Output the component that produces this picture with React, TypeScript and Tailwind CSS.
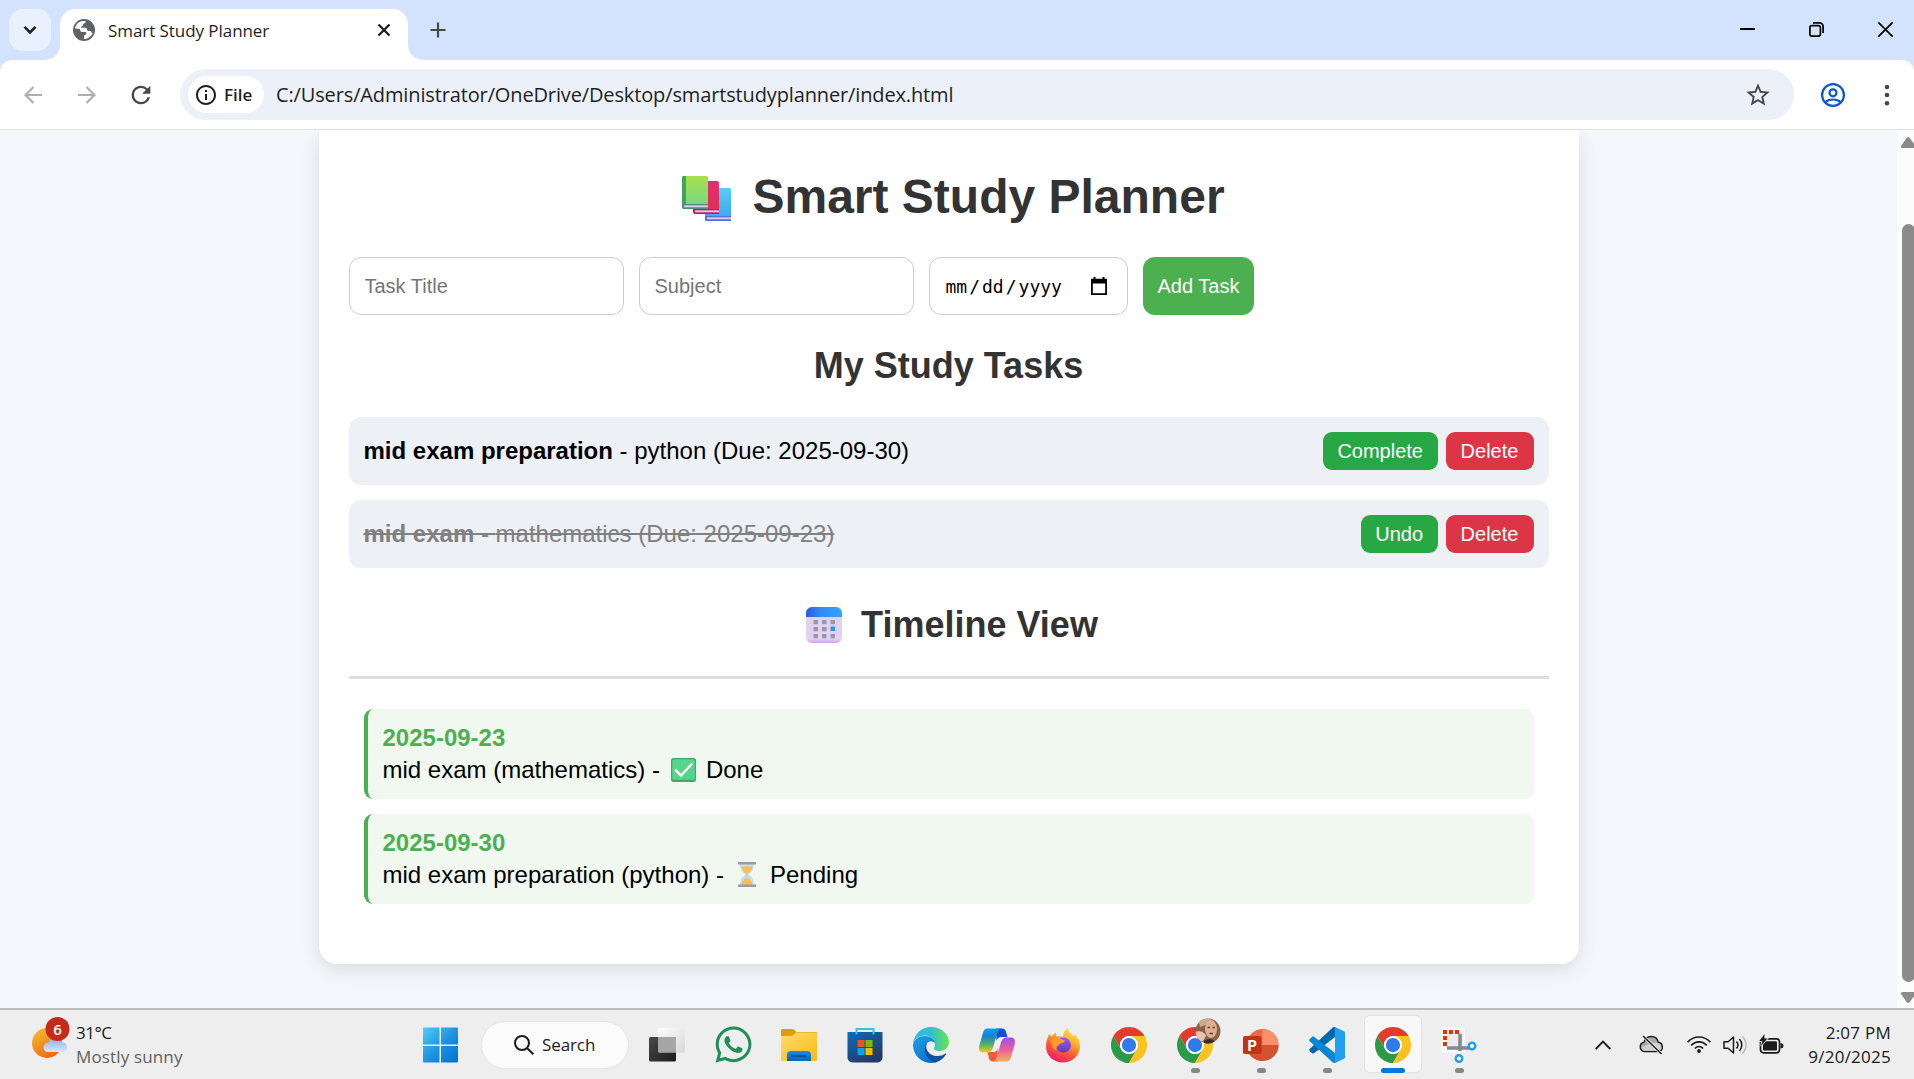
import React from "react";
import { FaWhatsapp } from "react-icons/fa";
import { MdOutlineInfo, MdRefresh, MdStarBorder } from "react-icons/md";

const ui = "font-['Open_Sans','Noto_Sans',sans-serif]";

/* ---------- browser chrome ---------- */

function GlobeIcon() {
  return (
    <svg width="22" height="22" viewBox="0 0 22 22">
      <circle cx="11" cy="11" r="11" fill="#5f6368" />
      <path d="M2 9.6C2.6 5.400 5.800 2.300 9.800 2c1.500 0 2.600.2 3.200.6-.3 1-.9 1.500-1.900 1.800-.9.3-1.300.8-1.200 1.700.1.900-.3 1.400-1.200 1.500-.6.1-.8.500-.7 1.100h4.200c1.200 0 1.700.7 1.800 1.800.1.900.6 1.400 1.600 1.400h1.500c.9 0 1.300.5 1.400 1.300.1.600.5.900 1.200.9-1 2.700-3.400 4.800-6.300 5.600-.5.1-1.600.2-2.400.2v-2.600c0-.9.5-1.400 1.400-1.500.8-.1 1.100-.6 1-1.500-.1-.8-.6-1.200-1.500-1.200H9.600c-1.500 0-2.300-.8-2.400-2.200-.1-.8-.6-1.200-1.500-1.200z" fill="#fff" />
    </svg>
  );
}

function TabStrip() {
  return (
    <div className="flex h-[60px] shrink-0 items-start bg-[#d3e3fd]">
      <button className="ml-[9px] mt-[9px] flex h-[42px] w-[42px] items-center justify-center rounded-[14px] bg-[#e9f1fe]">
        <svg width="14" height="10" viewBox="0 0 14 10" fill="none" stroke="#1f1f1f" strokeWidth="2.600">
          <path d="M1.500 1.800 7 7.300l5.500-5.500" />
        </svg>
      </button>
      <div className="relative ml-[9px] mt-[9px] flex h-[51px] w-[348px] items-center rounded-t-[15px] bg-white pb-[17px]">
        <svg className="absolute -left-[15px] bottom-0" width="15" height="15"><path d="M15 0v15H0A15 15 0 0 0 15 0Z" fill="#fff" /></svg>
        <svg className="absolute -right-[15px] bottom-0" width="15" height="15"><path d="M0 0v15h15A15 15 0 0 1 0 0Z" fill="#fff" /></svg>
        <div className="ml-[13px] mt-[8px]"><GlobeIcon /></div>
        <span className={`${ui} ml-[13px] mt-[10px] whitespace-nowrap text-[17px] leading-6 tracking-[-0.06px] text-[#1f1f1f]`}>Smart Study Planner</span>
        <svg className="ml-auto mr-[17px] mt-[8px] shrink-0" width="14" height="14" viewBox="0 0 14 14" stroke="#1f1f1f" strokeWidth="2.300">
          <path d="m1.500 1.500 11 11m0-11-11 11" />
        </svg>
      </div>
      <svg className="ml-[22px] mt-[22px]" width="16" height="16" viewBox="0 0 16 16" stroke="#474747" strokeWidth="2.200">
        <path d="M8 .5v15M.5 8h15" />
      </svg>
      <div className="ml-auto mr-[21px] mt-[22px] flex items-center gap-[54px]">
        <svg width="15" height="15" viewBox="0 0 15 15"><path d="M0 7h15" stroke="#000" strokeWidth="2" /></svg>
        <svg width="15" height="15" viewBox="0 0 15 15" fill="none" stroke="#000" strokeWidth="1.700">
          <rect x=".9" y="3.600" width="10.500" height="10.500" rx="2" />
          <path d="M4 .9h6.600a3.500 3.500 0 0 1 3.500 3.500V11" />
        </svg>
        <svg width="15" height="15" viewBox="0 0 15 15" stroke="#000" strokeWidth="1.700"><path d="m0 0 15 15M15 0 0 15" /></svg>
      </div>
    </div>
  );
}

function Toolbar() {
  return (
    <div className="shrink-0 bg-[#d3e3fd]">
      <div className="flex h-[70px] items-center rounded-t-[12px] border-b border-[#dcdcdc] bg-white">
        <svg className="ml-[24px]" width="18" height="18" viewBox="0 0 18 18" fill="none" stroke="#aeaeae" strokeWidth="2.200"><path d="M18 9H2M9.500 1 1.500 9l8 8" /></svg>
        <svg className="ml-[36px]" width="18" height="18" viewBox="0 0 18 18" fill="none" stroke="#aeaeae" strokeWidth="2.200"><path d="M0 9h16M8.500 1l8 8-8 8" /></svg>
        <MdRefresh className="ml-[31px] text-[#474747]" size={28} />
        <div className="ml-[25px] flex h-[51px] w-[1614px] items-center rounded-full bg-[#ebf0f9] pl-2">
          <div className="flex h-[37px] w-[76px] items-center rounded-full bg-white">
            <MdOutlineInfo className="ml-[6px] text-[#1f1f1f]" size={24} />
            <span className={`${ui} ml-[6px] text-[17px] font-semibold leading-6 text-[#1f1f1f]`}>File</span>
          </div>
          <span className={`${ui} ml-[12px] whitespace-nowrap text-[20px] leading-7 tracking-[-0.135px] text-[#1f1f1f]`}>C:/Users/Administrator/OneDrive/Desktop/smartstudyplanner/index.html</span>
          <MdStarBorder className="ml-auto mr-[22px] text-[#474747]" size={28} />
        </div>
        <svg className="ml-[27px]" width="24" height="24" viewBox="0 0 24 24" fill="none" stroke="#0b57d0" strokeWidth="2.200">
          <circle cx="12" cy="12" r="10.900" />
          <circle cx="12" cy="9.800" r="3.500" />
          <path d="M4 19.500c4-4 12-4 16 0" />
        </svg>
        <svg className="ml-[39px]" width="6" height="22" viewBox="0 0 6 22" fill="#474747">
          <circle cx="3" cy="3" r="2.300" /><circle cx="3" cy="11" r="2.300" /><circle cx="3" cy="19.300" r="2.300" />
        </svg>
      </div>
    </div>
  );
}

/* ---------- emoji drawings ---------- */

function Books() {
  return (
    <svg className="mt-[3px]" width="49" height="46" viewBox="0 0 49 46">
      <defs>
        <linearGradient id="bkG" x1="0" y1="0" x2="0" y2="1"><stop stopColor="#a8e04a" /><stop offset="1" stopColor="#72d68c" /></linearGradient>
        <linearGradient id="bkR" x1="0" y1="0" x2="0" y2="1"><stop stopColor="#e22d78" /><stop offset="1" stopColor="#e0314c" /></linearGradient>
        <linearGradient id="bkB" x1="0" y1="0" x2="0" y2="1"><stop stopColor="#56cdf5" /><stop offset="1" stopColor="#3aa5f0" /></linearGradient>
      </defs>
      <rect x="23" y="12" width="26" height="33" rx="1.500" fill="url(#bkB)" />
      <path d="M23 40h26v5H25a2 2 0 0 1-2-2z" fill="#4a74cf" /><path d="M25 41.300h24v2H25z" fill="#d8c8f0" />
      <rect x="12" y="5" width="25" height="33" rx="1.500" fill="url(#bkR)" />
      <path d="M11 33h26v5H13a2 2 0 0 1-2-2z" fill="#bd1d5e" /><path d="M13 34.300h24v2H13z" fill="#e3c4e8" />
      <rect width="26" height="33" rx="1.500" fill="url(#bkG)" />
      <path d="M0 1.500A1.500 1.500 0 0 1 1.500 0H4v28H0z" fill="#43a35a" />
      <path d="M0 28h26v5H2a2 2 0 0 1-2-2z" fill="#4d8f72" /><path d="M2 29.300h24v2H2z" fill="#d9cce9" />
    </svg>
  );
}

function CalendarEmoji() {
  return (
    <svg className="-mt-[1px]" width="36" height="36" viewBox="0 0 36 36">
      <defs>
        <linearGradient id="calTop"><stop stopColor="#2b5bd8" /><stop offset=".4" stopColor="#2f8bf6" /><stop offset="1" stopColor="#35a4fd" /></linearGradient>
        <linearGradient id="calBody" x1="0" y1="0" x2="0" y2="1"><stop stopColor="#dcd3ea" /><stop offset=".88" stopColor="#e2d3ef" /><stop offset="1" stopColor="#cda6ee" /></linearGradient>
      </defs>
      <rect width="36" height="36" rx="6" fill="url(#calBody)" />
      <path d="M0 10V6a6 6 0 0 1 6-6h24a6 6 0 0 1 6 6v4z" fill="url(#calTop)" />
      <g fill="#9c93ad">
        <path d="M7.500 13H12v4.200H7.500zM16 13h4.500v4.200H16zM24.500 13H29v4.200h-4.500zM7.500 20H12v4.200H7.500zM16 20h4.500v4.200H16zM7.500 27H12v4.200H7.500zM16 27h4.500v4.200H16zM24.500 27H29v4.200h-4.500z" />
      </g>
      <path d="M24.500 19.600H29V24h-4.500z" fill="#2f8ff5" />
    </svg>
  );
}

function CheckEmoji() {
  return (
    <svg className="ml-[11px] mr-[10px] mt-[-1px]" width="25" height="24" viewBox="0 0 25 24">
      <rect width="25" height="24" rx="2.500" fill="#3dab6c" />
      <rect x="1.300" y="1.300" width="22.500" height="20.500" rx="1.500" fill="#57d48c" />
      <path d="m4.800 12.300 5.200 5.200L20.500 6.200" fill="none" stroke="#fff" strokeWidth="2.400" strokeLinecap="round" />
    </svg>
  );
}

function HourglassEmoji() {
  return (
    <svg className="ml-[14px] mr-[14px] mt-[-1px]" width="18" height="25" viewBox="0 0 18 25">
      <path d="M2 2h14c0 5-1.500 7.500-5.500 10.500C14.500 15.500 16 18 16 23H2c0-5 1.500-7.500 5.500-10.500C3.500 9.500 2 7 2 2z" fill="#bfe0f6" />
      <path d="M3.200 4.500h11.600c-.6 3.400-2.300 5-5.300 7.500v4c3 1.200 4.800 3 5 7H3.500c.2-4 2-5.800 5-7v-4c-3-2.500-4.700-4.100-5.300-7.500z" fill="#f7bf55" />
      <path d="M0 0h18v2.600H0zM0 22.400h18V25H0z" fill="#9c9ba5" />
    </svg>
  );
}

/* ---------- page ---------- */

const field = "h-[58px] rounded-[12px] border border-[#cccccc] bg-white text-[20px] leading-[24px]";

function TaskRow({ title, rest, done, action }: { title: string; rest: string; done?: boolean; action: string }) {
  return (
    <li className="flex h-[68px] items-center justify-between rounded-[12px] bg-[#edf1f6] px-[15px]">
      <span className={done ? "whitespace-nowrap text-[24px] leading-[28px] text-[#808080] line-through" : "whitespace-nowrap text-[24px] leading-[28px] text-black"}>
        <strong className="font-bold">{title}</strong> - {rest}
      </span>
      <div className="flex gap-[8px] text-[20px] leading-[23px] text-white">
        <button className="h-[38px] rounded-[9px] bg-[#28a745] px-[14.500px]">{action}</button>
        <button className="h-[38px] w-[88px] rounded-[9px] bg-[#dc3545]">Delete</button>
      </div>
    </li>
  );
}

function TimelineItem({ date, text, icon, status }: { date: string; text: string; icon: React.ReactNode; status: string }) {
  return (
    <div className="h-[90px] rounded-[9px] border-l-4 border-[#4caf50] bg-[#f0f8f0] px-[15px] pt-[15px] text-[24px] leading-[28px] text-black">
      <div className="font-bold text-[#4caf50]">{date}</div>
      <div className="mt-[4px] flex items-center whitespace-nowrap">
        <span>{text} -</span>
        {icon}
        <span>{status}</span>
      </div>
    </div>
  );
}

function PlannerPage() {
  return (
    <div className="flex h-[878px] shrink-0 overflow-hidden border-t border-white bg-[#f4f6fb]">
      <div className="flex flex-1 justify-center">
        <main className="h-[833px] w-[1260px] rounded-b-[18px] bg-white px-[30px] font-['Liberation_Sans',Arial,sans-serif] shadow-[0_6px_18px_rgba(0,0,0,0.1)]">
          <h1 className="mt-[38px] flex items-center justify-center gap-[21px] pl-[10px] text-[48px] font-bold leading-[56px] text-[#333333]">
            <Books />
            Smart Study Planner
          </h1>
          <form className="mt-[32px] flex gap-[15px]" onSubmit={(e) => e.preventDefault()}>
            <input className={`${field} w-[275px] px-[15px] placeholder:text-[#757575]`} placeholder="Task Title" />
            <input className={`${field} w-[275px] px-[15px] placeholder:text-[#757575]`} placeholder="Subject" />
            <div className={`${field} flex w-[199px] items-center justify-between pl-[16px] pr-[20px] text-black`}>
              <span className="flex gap-[2px] pt-[1px] font-['DejaVu_Sans_Mono',monospace] text-[18px]">
                <span>mm</span><span>/</span><span>dd</span><span>/</span><span>yyyy</span>
              </span>
              <svg width="16" height="18" viewBox="0 0 16 18"><path d="M0 1.800h2.500V0h2v1.800h7V0h2v1.800H16V18H0zM1.800 6.500v9.700h12.400V6.500z" fillRule="evenodd" /></svg>
            </div>
            <button className="h-[58px] rounded-[12px] bg-[#4caf50] px-[15px] text-[20px] leading-[24px] text-white">Add Task</button>
          </form>
          <h2 className="mt-[30px] text-center text-[36px] font-bold leading-[42px] text-[#333333]">My Study Tasks</h2>
          <ul className="mt-[30px] flex flex-col gap-[15px]">
            <TaskRow title="mid exam preparation" rest="python (Due: 2025-09-30)" action="Complete" />
            <TaskRow title="mid exam" rest="mathematics (Due: 2025-09-23)" action="Undo" done />
          </ul>
          <h2 className="mt-[36px] flex items-center justify-center gap-[19px] pl-[7px] text-[36px] font-bold leading-[42px] text-[#333333]">
            <CalendarEmoji />
            Timeline View
          </h2>
          <section className="mt-[30px] flex flex-col gap-[15px] border-t-[3px] border-[#dddddd] px-[15px] pt-[30px]">
            <TimelineItem date="2025-09-23" text="mid exam (mathematics)" icon={<CheckEmoji />} status="Done" />
            <TimelineItem date="2025-09-30" text="mid exam preparation (python)" icon={<HourglassEmoji />} status="Pending" />
          </section>
        </main>
      </div>
      <div className="flex w-[17px] flex-col items-start overflow-hidden bg-[#fcfcfc] pl-[4px]">
        <svg className="mt-[6px] shrink-0" width="15" height="11" viewBox="0 0 15 11" fill="#8b8b8b"><path d="M5.600 1Q7.200-.8 8.800 1l5.500 7.500Q15.500 11 13 11H1.500Q-.8 11 .4 8.500z" /></svg>
        <div className="ml-px mt-[76px] h-[758px] w-[13px] shrink-0 rounded-full bg-[#8b8b8b]" />
        <svg className="mt-[10px] shrink-0" width="15" height="11" viewBox="0 0 15 11" fill="#8b8b8b"><path d="M5.600 10q1.600 1.800 3.200 0l5.500-7.500Q15.500 0 13 0H1.500Q-.8 0 .4 2.500z" /></svg>
      </div>
    </div>
  );
}

/* ---------- taskbar ---------- */

function ChromeLogo() {
  return (
    <svg width="36" height="36" viewBox="0 0 48 48">
      <path d="M24 12h20.780A24 24 0 0 0 3.220 12L13.600 30A12 12 0 0 1 24 12Z" fill="#e33b2e" />
      <path d="M3.220 12A24 24 0 0 0 24 48l10.390-18A12 12 0 0 1 13.600 30Z" fill="#2a9a47" />
      <path d="M44.780 12A24 24 0 0 1 24 48l10.390-18A12 12 0 0 0 24 12Z" fill="#fcc31e" />
      <circle cx="24" cy="24" r="12" fill="#fff" />
      <circle cx="24" cy="24" r="9.500" fill="#2f7bea" />
    </svg>
  );
}

function TaskViewIcon() {
  return (
    <svg width="36" height="36" viewBox="0 0 36 36">
      <defs>
        <linearGradient id="tvD" x1="0" y1="0" x2="1" y2="1"><stop stopColor="#4a4a4a" /><stop offset="1" stopColor="#1c1c1c" /></linearGradient>
        <linearGradient id="tvL" x1="0" y1="0" x2="1" y2="1"><stop stopColor="#fdfdfd" /><stop offset="1" stopColor="#d8d8d8" /></linearGradient>
      </defs>
      <rect y="10" width="27" height="24.500" rx="1.500" fill="url(#tvD)" />
      <rect x="9" y="1" width="27" height="24.500" rx="1.500" fill="url(#tvL)" />
      <path d="M9 10h18v15H9z" fill="#a6a6a6" />
    </svg>
  );
}

function FolderIcon() {
  return (
    <svg width="36" height="36" viewBox="0 0 36 36">
      <defs>
        <linearGradient id="fo" x1="0" y1="0" x2="1" y2="1"><stop stopColor="#ffdc6e" /><stop offset="1" stopColor="#fbb80f" /></linearGradient>
        <linearGradient id="foB" x1="0" y1="0" x2="0" y2="1"><stop stopColor="#1a8fe3" /><stop offset="1" stopColor="#0763b5" /></linearGradient>
      </defs>
      <path d="M0 3.500A1.500 1.500 0 0 1 1.500 2h10c1.500 0 3 2 4 3H35a1 1 0 0 1 1 1v4H0z" fill="#dd9d0b" />
      <path d="M0 9h11l4-3.400h20a1 1 0 0 1 1 1V33a1 1 0 0 1-1 1H1a1 1 0 0 1-1-1z" fill="url(#fo)" />
      <path d="M6 34v-6a4 4 0 0 1 4-4h16a4 4 0 0 1 4 4v6z" fill="url(#foB)" />
      <path d="M10 29h15" stroke="#084d8f" strokeWidth="1.800" />
    </svg>
  );
}

function StoreIcon() {
  return (
    <svg width="36" height="36" viewBox="0 0 36 36">
      <defs><linearGradient id="st" x1="0" y1="0" x2=".6" y2="1"><stop stopColor="#0c6bbf" /><stop offset="1" stopColor="#243a66" /></linearGradient></defs>
      <path d="M.5 5h35v25.500a5 5 0 0 1-5 5h-25a5 5 0 0 1-5-5z" fill="url(#st)" />
      <path d="M9.500 7.500V2h17v5.500" fill="none" stroke="#30c0f5" strokeWidth="2" />
      <path d="M10.500 13h7v7h-7z" fill="#f25022" /><path d="M18.500 13h7v7h-7z" fill="#7fba00" />
      <path d="M10.500 21h7v7h-7z" fill="#00a4ef" /><path d="M18.500 21h7v7h-7z" fill="#ffb900" />
    </svg>
  );
}

function EdgeIcon() {
  return (
    <svg width="36" height="36" viewBox="0 0 36 36">
      <defs>
        <linearGradient id="edT"><stop stopColor="#35b8e8" /><stop offset=".5" stopColor="#2cc3cd" /><stop offset="1" stopColor="#6ae34d" /></linearGradient>
        <linearGradient id="edB" x1="0" y1="0" x2=".6" y2="1"><stop stopColor="#1fa0e8" /><stop offset="1" stopColor="#0a72ce" /></linearGradient>
      </defs>
      <path d="M0 17C1 7 8.500 0 18 0c10.500 0 18 7.500 18 15 0 5.500-4 9-9 9-4.500 0-6.500-1.500-6-3 .5-1 1-2 1-3.500C22 12 17 8.500 11.500 8.500 6 8.500 1.500 12 0 17z" fill="url(#edT)" />
      <path d="M0 17.500C1.200 12 6 9 11.500 9c6 0 10.500 3.500 10.500 7.500-1.500-3-6.500-3.500-8.500.5-3 6.500 2 16 10 18.200C12 38.500-.5 30 0 17.500z" fill="url(#edB)" />
      <path d="M14.500 14.500c-4 8 2.500 15 10 14.500 3 0 5.500-1 7.600-2.300.8-.4 1.200.2.800.9C30.700 31.500 27 34.500 22.500 35.500 14 34 8.500 22.500 14.500 14.500z" fill="#11509c" />
    </svg>
  );
}

function CopilotIcon() {
  return (
    <svg width="36" height="34" viewBox="0 0 36 34">
      <defs>
        <linearGradient id="cpA" x1="0" y1="0" x2="0" y2="1"><stop stopColor="#12a0ec" /><stop offset=".3" stopColor="#1681cf" /><stop offset=".65" stopColor="#4fae6b" /><stop offset="1" stopColor="#f3cb1c" /></linearGradient>
        <linearGradient id="cpB" x1="0" y1="0" x2="0" y2="1"><stop stopColor="#a14df0" /><stop offset=".5" stopColor="#e5609c" /><stop offset="1" stopColor="#fdb05f" /></linearGradient>
      </defs>
      <path d="M17 .5h6c2.500 0 3.500 1.500 4.200 4L28.500 9h-5c-4 0-5 1-6 4z" fill="#1450cf" />
      <path d="M19 33.500h-5c-2.500 0-3.500-1.500-4.200-4L8.500 24h5c4 0 4-1 5-4z" fill="#ef5a3a" />
      <path d="M8 .5h14.500c-2.500 0-3.500 2-4.200 4.500L14.500 18c-1.200 4-2.500 6.500-6 6.500H4c-4 0-4.500-3.500-3.500-7.500l3-10.500C4.500 2.500 5.500.5 8 .5z" fill="url(#cpA)" />
      <path d="M28 33.500H13.500c2.500 0 3.500-2 4.200-4.500L21.500 16c1.200-4 2.500-6.500 6-6.500H32c4 0 4.500 3.500 3.500 7.500l-3 10.500c-1 4-2 6-4.500 6z" fill="url(#cpB)" />
    </svg>
  );
}

function FirefoxIcon() {
  return (
    <svg width="34" height="36" viewBox="0 0 34 36">
      <defs>
        <linearGradient id="ffA" x1=".8" y1="0" x2=".3" y2="1"><stop stopColor="#fff04a" /><stop offset=".35" stopColor="#ffb02a" /><stop offset=".65" stopColor="#ff5a36" /><stop offset="1" stopColor="#e81a6c" /></linearGradient>
        <linearGradient id="ffB" x1="0" y1="0" x2="0" y2="1"><stop stopColor="#9f5bf5" /><stop offset="1" stopColor="#5a3bbd" /></linearGradient>
      </defs>
      <path d="M2.500 8.500 3.500 7l2 2.500C7 8 8 6.500 10 5.500l.5 4c2.500-.5 5 0 6.500.5C17 6 19 2.500 22 .5c.5 4 2.500 6 5 8.500 1-.5 1.500-1 1.500-2C32 10 34 14.500 34 19c0 9.500-7.500 16.500-17 16.500S0 28.500 0 19.500c0-4.500 1-7 2.500-11z" fill="url(#ffA)" />
      <circle cx="17.500" cy="18" r="7.500" fill="url(#ffB)" />
      <path d="M5 13c3-3 7-3.500 10-1l4 1.500c-.5 2-2 2.500-4.500 3-1 .3-1.500 1-2 2-2 .5-3 2.500-2 5-3-1-5.500-5-5.500-10.500z" fill="#ff9a2b" />
    </svg>
  );
}

function PowerPointIcon() {
  return (
    <span className="relative block h-[34px] w-[36px]">
      <svg className="absolute inset-0" width="36" height="34" viewBox="0 0 36 34">
        <circle cx="19.500" cy="17" r="16" fill="#ed6c47" />
        <path d="M19.500 1a16 16 0 0 1 16 16h-16z" fill="#ff8f6b" />
        <path d="M3.500 17h32a16 16 0 0 1-32 0z" fill="#d35230" />
        <rect y="8" width="18.500" height="18" rx="1.800" fill="#bf3516" />
      </svg>
      <span className="absolute left-0 top-[8px] w-[18px] text-center font-['Lato',sans-serif] text-[15px] font-black leading-[18px] text-white">P</span>
    </span>
  );
}

function VsCodeIcon() {
  return (
    <svg width="36" height="36" viewBox="0 0 36 36">
      <path d="M26 10 5 26.300c-.6.4-1.200.4-1.800 0l-2.500-2.100c-.7-.7-.7-1.600 0-2.300L23.500.7c.8-.7 1.700-.8 2.500-.5z" fill="#0069ac" />
      <path d="M26 26 5 9.800c-.6-.4-1.200-.4-1.800 0L.7 11.900c-.7.7-.7 1.600 0 2.300l22.800 21.100c.8.700 1.700.9 2.500.5z" fill="#0a87d0" />
      <path d="m26 0 9 4.200c.6.300 1 .8 1 1.600v24.400c0 .8-.4 1.300-1 1.600L26 36z" fill="#22a0f2" />
    </svg>
  );
}

function SnipIcon() {
  return (
    <svg width="36" height="36" viewBox="0 0 36 36">
      <rect x="0" y="0" width="24" height="26" rx="2" fill="#f5f7f9" />
      <path d="M4 10V5h18v16H9z" fill="#e9edf2" />
      <path d="M19 7v17M6 21h24" stroke="#85898e" strokeWidth="3.600" fill="none" />
      <path d="M2 3h4v4H2zM8 3h4v4H8zM14 3h4v4h-4zM2 9h4v4H2zM2 15h4v4H2z" fill="#d83b01" />
      <circle cx="31" cy="19" r="3.300" fill="#fff" stroke="#1f9fe6" strokeWidth="2.400" />
      <circle cx="18" cy="31.500" r="3.300" fill="#fff" stroke="#1f9fe6" strokeWidth="2.400" />
    </svg>
  );
}

function Avatar() {
  return (
    <svg className="absolute left-[33px] top-[8px]" width="26" height="26" viewBox="0 0 26 26">
      <defs><clipPath id="av"><circle cx="13" cy="13" r="12.500" /></clipPath></defs>
      <g clipPath="url(#av)">
        <path d="M0 0h26v26H0z" fill="#8a6248" />
        <path d="M3 0h14l-4 6-8 3z" fill="#c9ab8d" />
        <ellipse cx="16" cy="11" rx="6" ry="9" fill="#deb093" />
        <path d="M0 14c4-2 10 0 11 4l-3 5H0z" fill="#e6c4ab" />
        <path d="M9 23c4-3 10-3 12 3H9z" fill="#3a2a25" />
        <path d="M12.500 9.500h2.500m2.500 0H20M14.500 15.500h3.500" stroke="#6e382c" strokeWidth="1.300" />
      </g>
    </svg>
  );
}

type AppState = "idle" | "running" | "active";

function Slot({ children, state = "idle" }: { children: React.ReactNode; state?: AppState }) {
  return (
    <div className="relative flex h-[69px] w-[66px] items-center justify-center">
      {state === "active" && <span className="absolute inset-x-[4px] top-[5px] h-[58px] rounded-[6px] border border-[#e3e3e3] bg-[#f8f8f8]" />}
      <span className="relative">{children}</span>
      {state === "running" && <span className="absolute bottom-[6px] left-[29px] h-[5px] w-[9px] rounded-full bg-[#868686]" />}
      {state === "active" && <span className="absolute bottom-[6px] left-[21px] h-[5px] w-[24px] rounded-full bg-[#0078d7]" />}
    </div>
  );
}

function Weather() {
  return (
    <div className="flex w-[422px] items-center pl-[31px]">
      <div className="relative mb-[12px] h-[45px] w-[40px]">
        <svg width="40" height="45" viewBox="0 0 40 45">
          <defs>
            <linearGradient id="sun" x1=".2" y1="0" x2=".7" y2="1"><stop stopColor="#f2bb33" /><stop offset="1" stopColor="#f0650f" /></linearGradient>
            <linearGradient id="cl" x1="0" y1="0" x2="0" y2="1"><stop stopColor="#8db4ef" /><stop offset="1" stopColor="#dbe7fa" /></linearGradient>
          </defs>
          <circle cx="16" cy="27" r="15" fill="url(#sun)" />
          <path d="M17 36a4.500 4.500 0 0 1 0-9 8 8 0 0 1 13.500-.8A5 5 0 1 1 30 36z" fill="url(#cl)" />
          <circle cx="26.500" cy="13" r="12" fill="#c42b1c" />
        </svg>
        <span className={`${ui} absolute left-[14.500px] top-[1px] w-[24px] text-center text-[15px] font-semibold leading-6 text-white`}>6</span>
      </div>
      <div className={`${ui} ml-[5px] text-[17px] leading-[24px]`}>
        <div className="text-[#1b1b1b] tracking-[-0.5px]">31°C</div>
        <div className="whitespace-nowrap text-[#606060] tracking-[0.15px]">Mostly sunny</div>
      </div>
    </div>
  );
}

function Tray() {
  return (
    <div className="ml-auto flex items-center pr-[23px]">
      <svg width="16" height="10" viewBox="0 0 16 10" fill="none" stroke="#1b1b1b" strokeWidth="1.800"><path d="m.7 9 7.300-7.500L15.300 9" /></svg>
      <svg className="ml-[28px]" width="25" height="20" viewBox="0 0 25 20">
        <path d="M5.500 16.500a4.700 4.700 0 0 1-.4-9.300C6 3.500 9 1.500 12.200 1.500c3.800 0 6.400 2.400 7 5.700a4.700 4.700 0 0 1 .3 9.300z" fill="#a9a9a9" stroke="#1b1b1b" strokeWidth="1.400" />
        <path d="M2 12.500 13 8l5-.5 3.500 1.500 1 5-2.500 2H5z" fill="#dadada" opacity=".8" />
        <path d="m4 1 18.500 18" stroke="#eee" strokeWidth="3" /><path d="m4 1 18.500 18" stroke="#1b1b1b" strokeWidth="1.500" />
      </svg>
      <svg className="ml-[23px]" width="24" height="19" viewBox="0 0 24 19" fill="none" stroke="#1b1b1b" strokeWidth="1.600">
        <path d="M.6 7.200c6.300-7 16.500-7 22.800 0M4.200 10.500c4.400-4.900 11.200-4.900 15.600 0M7.800 13.500c2.500-2.600 5.900-2.600 8.400 0" />
        <circle cx="12" cy="16" r="1.900" fill="#1b1b1b" stroke="none" />
      </svg>
      <svg className="ml-[12px]" width="25" height="20" viewBox="0 0 25 20" fill="none" stroke="#1b1b1b" strokeWidth="1.500">
        <path d="M1 6.800h4.200L10.500 2v16l-5.300-4.800H1z" strokeLinejoin="round" />
        <path d="M13.500 6.500c1.700 2 1.700 5 0 7M16.500 4c3 3.500 3 8.500 0 12" />
        <path d="M19.500 1.500c4.700 5 4.700 12 0 17" stroke="#b9b9b9" />
      </svg>
      <svg className="-mt-[2px] ml-[11px]" width="25" height="20" viewBox="0 0 25 20">
        <rect x="1.500" y="4.800" width="19" height="14" rx="3" fill="none" stroke="#1b1b1b" strokeWidth="1.700" />
        <rect x="4" y="7.200" width="14" height="9.200" rx="1.200" fill="#1b1b1b" />
        <path d="M21.500 9.300h1q2 0 2 2.500t-2 2.500h-1z" fill="#1b1b1b" />
        <path d="M5.500 0 .3 7h3L2 12l6.500-7.500H5.300z" fill="#1b1b1b" stroke="#eee" strokeWidth="1.400" paintOrder="stroke" />
      </svg>
      <div className={`${ui} ml-[23px] w-[84px] whitespace-nowrap text-right text-[17px] leading-[24px] tracking-[0.25px] text-[#1b1b1b]`}>
        <div>2:07 PM</div>
        <div>9/20/2025</div>
      </div>
    </div>
  );
}

function Taskbar() {
  return (
    <div className="flex h-[71px] shrink-0 items-stretch border-t-2 border-[#bdbdbd] bg-[#eeeeee]">
      <Weather />
      <div className="flex items-center">
        <svg width="36" height="36" viewBox="0 0 36 36">
          <defs><linearGradient id="win" gradientUnits="userSpaceOnUse" x1="0" y1="0" x2="36" y2="36"><stop stopColor="#4fd0fc" /><stop offset=".55" stopColor="#1b8fe0" /><stop offset="1" stopColor="#0072d0" /></linearGradient></defs>
          <path d="M2 .5h15.500v17H1V1.500a1 1 0 0 1 1-1zM19 .5h16a1 1 0 0 1 1 1v16H19zM1 19h16.500v16.500H2a1 1 0 0 1-1-1zM19 19h17v15.500a1 1 0 0 1-1 1H19z" fill="url(#win)" />
        </svg>
        <div className="ml-[24px] flex h-[46px] w-[146px] items-center rounded-full bg-[#fbfbfb] pl-[32px] outline outline-[#e6e6e6]">
          <svg width="20" height="20" viewBox="0 0 20 20" fill="none" stroke="#1b1b1b" strokeWidth="2"><circle cx="8" cy="8" r="7" /><path d="m13 13 6.300 6.300" /></svg>
          <span className={`${ui} ml-[8px] text-[17px] leading-6 tracking-[-0.1px] text-[#1b1b1b]`}>Search</span>
        </div>
        <div className="ml-[6px] flex">
          <Slot><TaskViewIcon /></Slot>
          <Slot><FaWhatsapp size={41} className="text-[#1f8f57]" /></Slot>
          <Slot><FolderIcon /></Slot>
          <Slot><StoreIcon /></Slot>
          <Slot><EdgeIcon /></Slot>
          <Slot><CopilotIcon /></Slot>
          <Slot><FirefoxIcon /></Slot>
          <Slot><ChromeLogo /></Slot>
          <div className="relative"><Slot state="running"><ChromeLogo /></Slot><Avatar /></div>
          <Slot state="running"><PowerPointIcon /></Slot>
          <Slot state="running"><VsCodeIcon /></Slot>
          <Slot state="active"><ChromeLogo /></Slot>
          <Slot state="running"><SnipIcon /></Slot>
        </div>
      </div>
      <Tray />
    </div>
  );
}

export default function App() {
  return (
    <div className="flex h-[1079px] w-[1914px] flex-col overflow-hidden bg-white">
      <TabStrip />
      <Toolbar />
      <PlannerPage />
      <Taskbar />
    </div>
  );
}
